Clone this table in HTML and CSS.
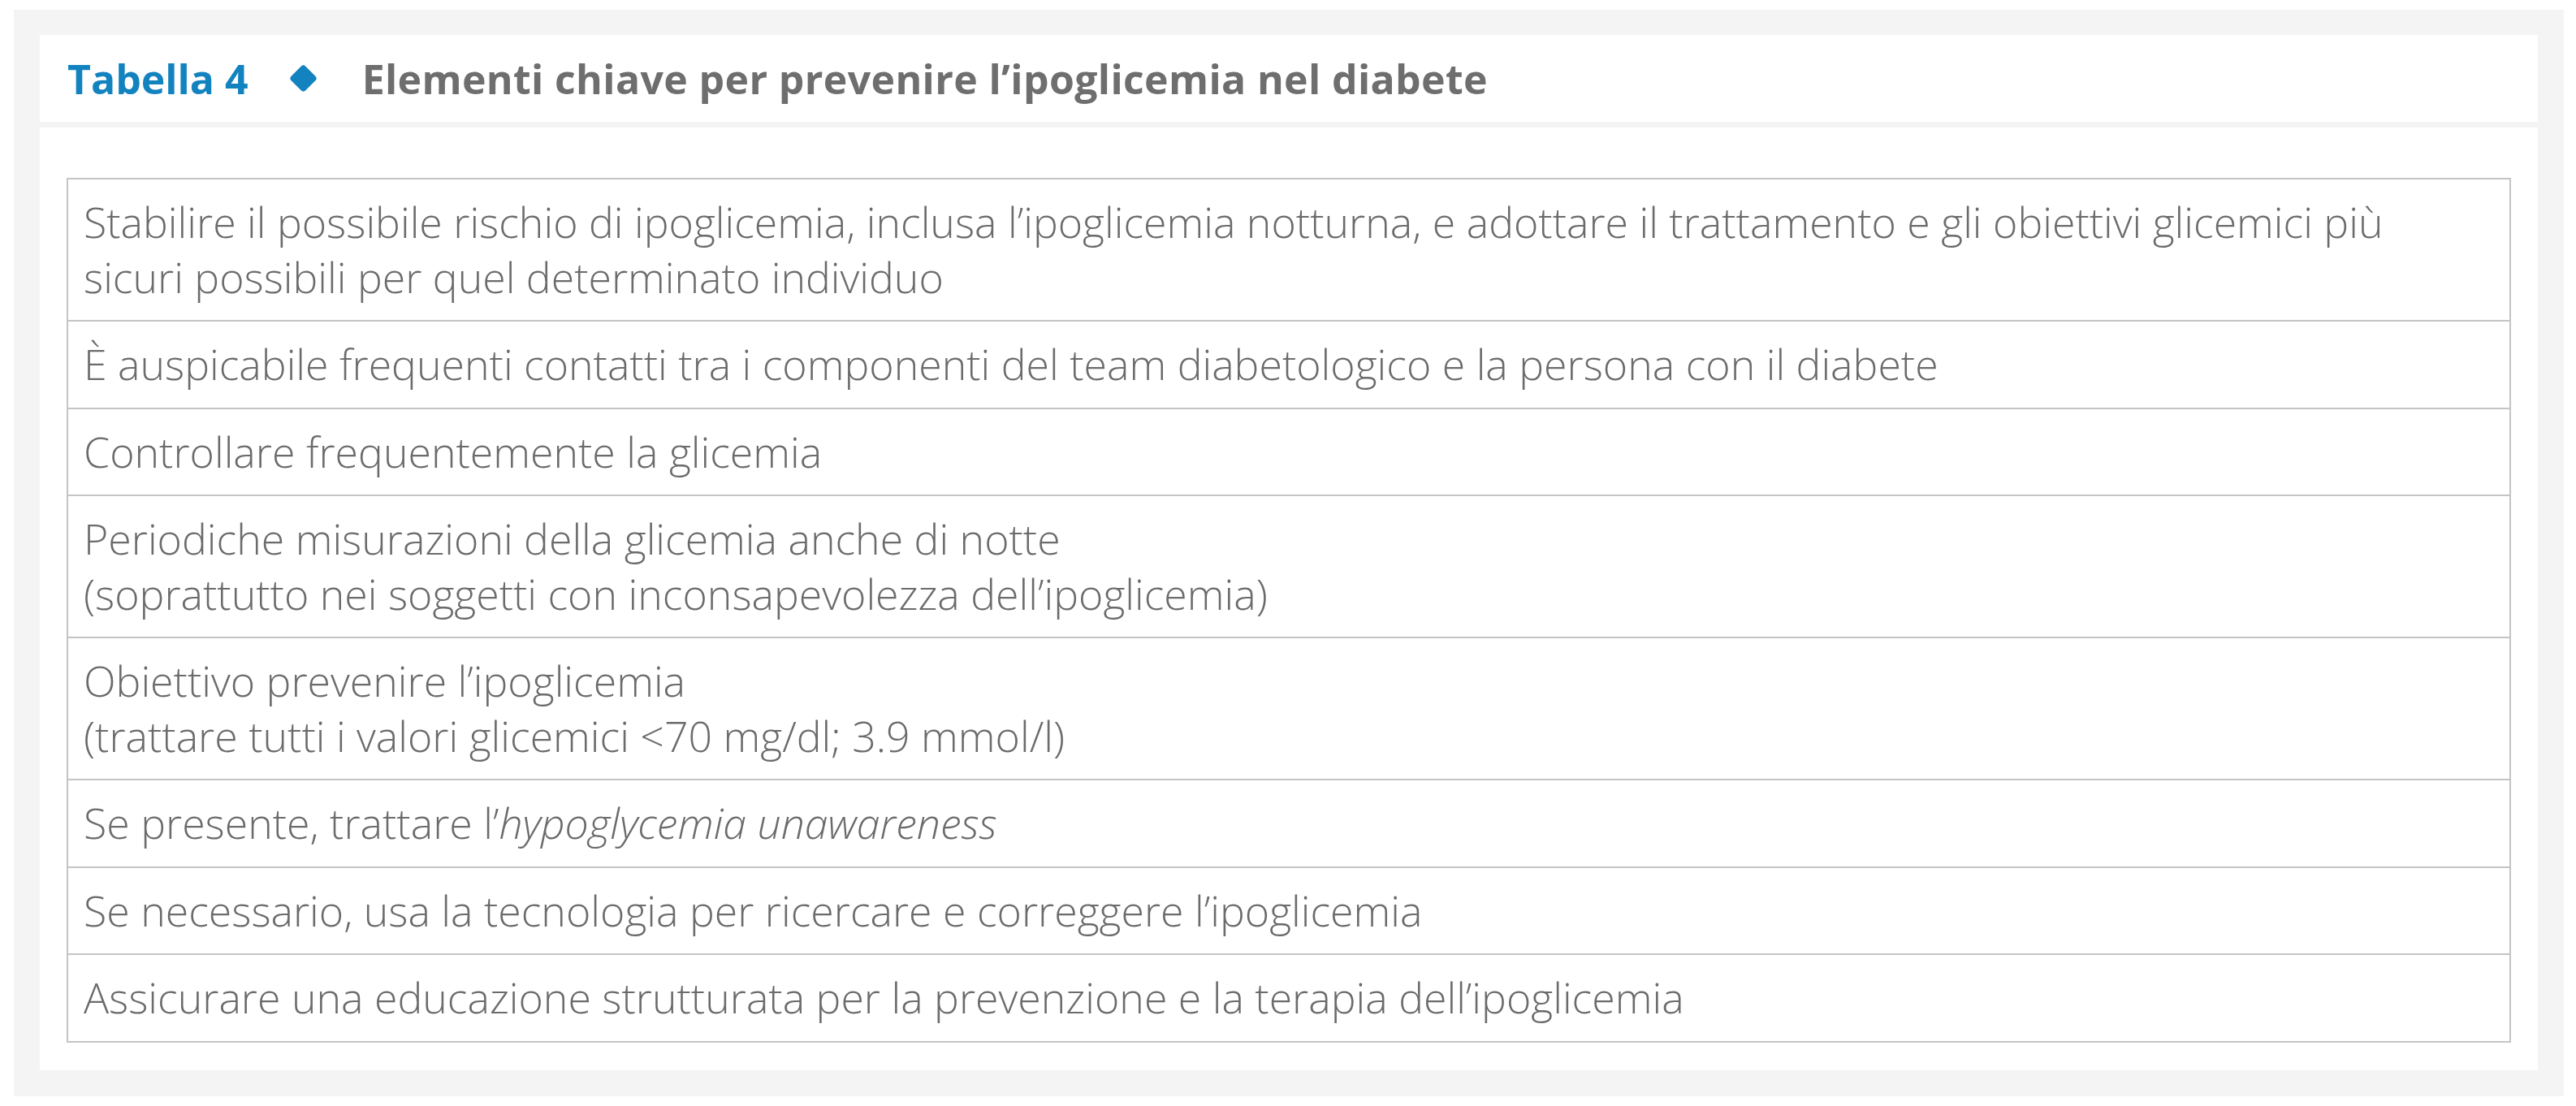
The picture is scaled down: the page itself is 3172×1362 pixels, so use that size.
FILE: index.html
```html
<!DOCTYPE html>
<html lang="it">
<head>
<meta charset="utf-8">
<title>Tabella 4</title>
<link rel="stylesheet" href="styles.css">
</head>
<body>
<div class="frame">
  <header class="caption">
    <span class="caption-label">Tabella 4</span>
    <span class="caption-mark" aria-hidden="true"></span>
    <h1 class="caption-title">Elementi chiave per prevenire l’ipoglicemia nel diabete</h1>
  </header>
  <div class="content">
    <table class="keys">
      <tbody>
        <tr><td>Stabilire il possibile rischio di ipoglicemia, inclusa l’ipoglicemia notturna, e adottare il trattamento e gli obiettivi glicemici più<br>sicuri possibili per quel determinato individuo</td></tr>
        <tr><td>È auspicabile frequenti contatti tra i componenti del team diabetologico e la persona con il diabete</td></tr>
        <tr><td>Controllare frequentemente la glicemia</td></tr>
        <tr><td>Periodiche misurazioni della glicemia anche di notte<br>(soprattutto nei soggetti con inconsapevolezza dell’ipoglicemia)</td></tr>
        <tr><td>Obiettivo prevenire l’ipoglicemia<br>(trattare tutti i valori glicemici &lt;70 mg/dl; 3.9 mmol/l)</td></tr>
        <tr><td>Se presente, trattare l’<em>hypoglycemia unawareness</em></td></tr>
        <tr><td>Se necessario, usa la tecnologia per ricercare e correggere l’ipoglicemia</td></tr>
        <tr><td>Assicurare una educazione strutturata per la prevenzione e la terapia dell’ipoglicemia</td></tr>
      </tbody>
    </table>
  </div>
</div>
</body>
</html>
```

FILE: styles.css
```css
html, body {
  margin: 0;
  background: #ffffff;
}
body {
  padding: 12px 15px 14px 17px;
  font-family: "Open Sans", "Noto Sans", "Liberation Sans", sans-serif;
  color: #6e6e6e;
}
.frame {
  background: #f4f4f4;
  padding: 31px 32px 32px;
  display: flex;
  flex-direction: column;
  gap: 7px;
}
.caption {
  background: #ffffff;
  height: 107px;
  display: flex;
  align-items: center;
  padding-left: 34px;
}
.caption-label {
  color: #1383c0;
  font-weight: 700;
  font-size: 50px;
}
.caption-mark {
  flex: none;
  width: 25px;
  height: 25px;
  background: #1383c0;
  border-radius: 4px;
  transform: rotate(45deg);
  margin: 0 60px 0 55px;
}
.caption-title {
  margin: 0;
  font-size: 50px;
  font-weight: 700;
  letter-spacing: 0.35px;
  color: #6e6e6e;
}
.content {
  background: #ffffff;
  padding: 62px 33px 34px;
}
.keys {
  width: 100%;
  border-collapse: collapse;
}
.keys td {
  border: 2px solid #c4c4c4;
  padding: 19px 19px;
  font-size: 51.8px;
  font-weight: 300;
  line-height: 67.5px;
  color: #6b6b6b;
}
.keys em {
  font-style: italic;
}
```
